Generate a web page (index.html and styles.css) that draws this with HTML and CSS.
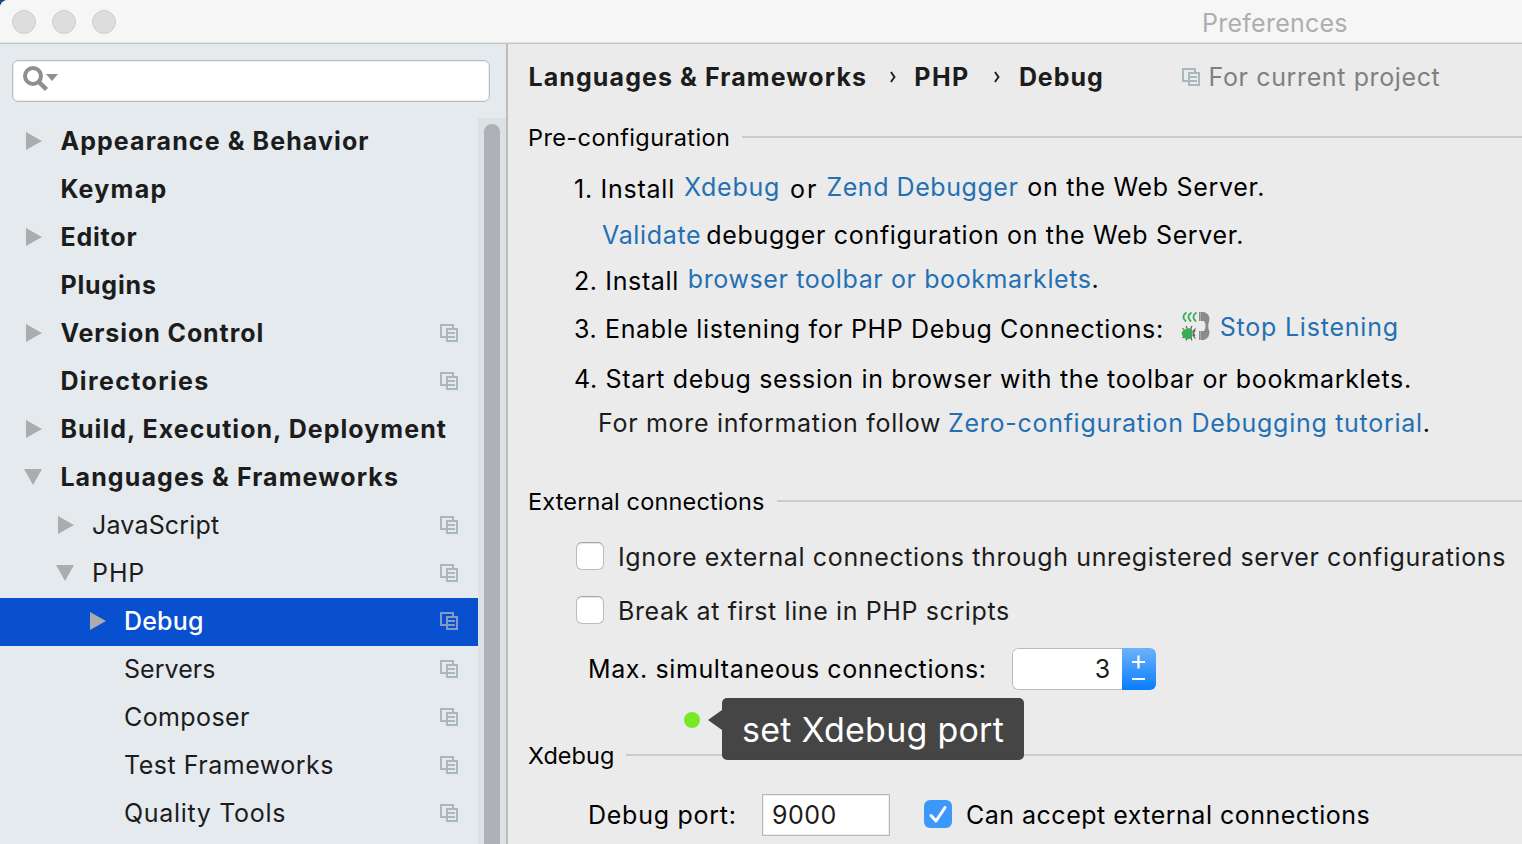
FILE: index.html
```
<!DOCTYPE html>
<html lang="en">
<head>
<meta charset="utf-8">
<title>Preferences</title>
<link rel="stylesheet" href="styles.css">
</head>
<body>
<svg class="defs" aria-hidden="true">
  <symbol id="copy" viewBox="0 0 18 18"><path d="M6 13H1V1H13V4M7 5H17V17H7ZM8 9H15M8 13H15" fill="none" stroke="currentColor" stroke-width="2"/></symbol>
  <symbol id="right" viewBox="0 0 18 18"><path d="M2 0L18 9L2 18Z" fill="#acacac"/></symbol>
  <symbol id="down" viewBox="0 0 18 18"><path d="M0 1H18L9 17Z" fill="#acacac"/></symbol>
</svg>
<div class="window">
  <header class="titlebar">
    <div class="lights"><i></i><i></i><i></i></div>
    <span class="title">Preferences</span>
  </header>
  <div class="body">
    <aside class="sidebar">
      <div class="search">
        <svg width="48" height="36" viewBox="0 0 48 36"><circle cx="20" cy="15" r="8" fill="none" stroke="#8f8f8f" stroke-width="4"/><path d="M26 21L33.500 28.500" stroke="#8f8f8f" stroke-width="4.500"/><path d="M33 13H45L39 20Z" fill="#8f8f8f"/></svg>
      </div>
      <div class="treewrap">
        <ul class="tree">
          <li class="top"><svg class="arrow"><use href="#right"/></svg><span class="k109">Appearance &amp; Behavior</span></li>
          <li class="top"><i class="arrow"></i><span class="k124">Keymap</span></li>
          <li class="top"><svg class="arrow"><use href="#right"/></svg><span class="k81">Editor</span></li>
          <li class="top"><i class="arrow"></i><span class="k81">Plugins</span></li>
          <li class="top"><svg class="arrow"><use href="#right"/></svg><span class="k91">Version Control</span><svg class="copy"><use href="#copy"/></svg></li>
          <li class="top"><i class="arrow"></i><span class="k137">Directories</span><svg class="copy"><use href="#copy"/></svg></li>
          <li class="top"><svg class="arrow"><use href="#right"/></svg><span class="k104">Build, Execution, Deployment</span></li>
          <li class="top"><svg class="arrow"><use href="#down"/></svg><span class="k109">Languages &amp; Frameworks</span></li>
          <li class="d1"><svg class="arrow"><use href="#right"/></svg><span class="k18">JavaScript</span><svg class="copy"><use href="#copy"/></svg></li>
          <li class="d1"><svg class="arrow"><use href="#down"/></svg><span class="k91">PHP</span><svg class="copy"><use href="#copy"/></svg></li>
          <li class="d2 selected"><svg class="arrow"><use href="#right"/></svg><span class="k18">Debug</span><svg class="copy"><use href="#copy"/></svg></li>
          <li class="d2"><i class="arrow"></i><span class="k5">Servers</span><svg class="copy"><use href="#copy"/></svg></li>
          <li class="d2"><i class="arrow"></i><span class="k40">Composer</span><svg class="copy"><use href="#copy"/></svg></li>
          <li class="d2"><i class="arrow"></i><span class="k51">Test Frameworks</span><svg class="copy"><use href="#copy"/></svg></li>
          <li class="d2"><i class="arrow"></i><span class="k68">Quality Tools</span><svg class="copy"><use href="#copy"/></svg></li>
        </ul>
        <div class="track"><div class="thumb"></div></div>
      </div>
    </aside>
    <main class="main">
      <div class="crumbs">
        <b class="k109">Languages &amp; Frameworks</b>
        <svg class="chev c1" width="6" height="12" viewBox="0 0 6 12"><path d="M1 1Q3 4 4.500 6Q3 8 1 11" fill="none" stroke="#222" stroke-width="2"/></svg>
        <b class="k156">PHP</b>
        <svg class="chev c2" width="6" height="12" viewBox="0 0 6 12"><path d="M1 1Q3 4 4.500 6Q3 8 1 11" fill="none" stroke="#222" stroke-width="2"/></svg>
        <b class="k93">Debug</b>
        <svg class="copy scope-icon"><use href="#copy"/></svg>
        <span class="scope k62">For current project</span>
      </div>
      <h2 class="head"><span class="k40">Pre-configuration</span></h2>
      <div class="line l1"><span class="k74">1. Install</span><a class="up k74 g9">Xdebug</a><span class="k201 g10">or</span><a class="up k55 g8">Zend Debugger</a><span class="up k69 g9">on the Web Server.</span></div>
      <div class="line l2"><a class="k66">Validate</a><span class="k66 g5">debugger configuration on the Web Server.</span></div>
      <div class="line l3"><span class="k62">2. Install</span><a class="up k60 g9">browser toolbar or bookmarklets</a><span class="up">.</span></div>
      <div class="line l4"><span class="k64">3. Enable listening for PHP Debug Connections:</span>
        <svg class="phone" width="30" height="30" viewBox="0 0 30 30">
          <path d="M5.500 1.500Q-.5 5.500 5 10.500M10.500 1.500Q4.500 5.500 10 10.500M15.500 1.500Q9.500 5.500 15 10.500" fill="none" stroke="#37ad55" stroke-width="1.800"/>
          <path d="M5 15L6.500 18M11 15L9.500 18M1.500 17L4 20M1.500 27L4 24.500M5 29.500L6.500 26M11 29.500L9.500 26M14.500 17.500L12 20.500M14.500 27.500L12 24.500" stroke="#555" stroke-width="1.100"/>
          <path d="M11 17.500V27Q8 29 4 27.500Q.5 25 .8 21Q5 16 11 17.500Z" fill="#37ad55"/>
          <path d="M11.500 19.500Q15 18.500 14.500 20L13 22L14.500 24.500Q13 26 11.500 25Z" fill="#666"/>
          <path d="M18 1H23Q29 3 28.500 9Q26 15 28.500 21Q29 26 23 29H18V20H23Q26 15 23 10H18Z" fill="#8b8b8b"/>
          <path d="M19.500 1V10M19.500 20V29" stroke="#aaa"/>
        </svg>
        <a class="up k78 g9">Stop Listening</a></div>
      <div class="line l5"><span class="k66">4. Start debug session in browser with the toolbar or bookmarklets.</span></div>
      <div class="line l6"><span class="soft k69">For more information follow</span><a class="k72 g7">Zero-configuration Debugging tutorial</a><span>.</span></div>
      <h2 class="head h-ext"><span class="k16">External connections</span></h2>
      <div class="line opt o1"><i class="box"></i><span class="k63">Ignore external connections through unregistered server configurations</span></div>
      <div class="line opt o2"><i class="box"></i><span class="k61">Break at first line in PHP scripts</span></div>
      <div class="line max"><span class="k60">Max. simultaneous connections:</span>
        <div class="spinner"><span class="num">3</span><span class="step"><svg width="34" height="42" viewBox="0 0 34 42"><path d="M10 14H23M16.500 7.500V20.500M10 31H23" stroke="#fff" stroke-width="2.200"/></svg></span></div>
      </div>
      <h2 class="head h-x"><span class="k5">Xdebug</span></h2>
      <div class="line port"><span class="k74">Debug port:</span><span class="field k51">9000</span><i class="box on"><svg width="28" height="28" viewBox="0 0 28 28"><path d="M7 15.500L12 21L21 7.500" fill="none" stroke="#fff" stroke-width="3" stroke-linecap="round" stroke-linejoin="round"/></svg></i><span class="k49">Can accept external connections</span></div>
    </main>
  </div>
  <i class="dot"></i>
  <div class="tip">set Xdebug port</div>
</div>
</body>
</html>
```
FILE: styles.css
```
* { box-sizing: border-box; }
body { margin: 0; background: #20477c; font: 25px/30px Inter, sans-serif; color: #1c1c1c; overflow: hidden; }
.defs { position: absolute; width: 0; height: 0; }
.window { position: relative; width: 1522px; height: 844px; overflow: hidden; display: flex; flex-direction: column; background: #ebebeb; border-top-left-radius: 8px; white-space: nowrap; }
.titlebar { height: 44px; flex: none; background: #f6f6f6; border-bottom: 1px solid #c6c8c9; box-shadow: inset 0 -1px #e0e1e1; display: flex; align-items: center; padding: 0 0 0 12px; }
.lights { display: flex; gap: 16px; width: 1190px; }
.lights i { width: 24px; height: 24px; border-radius: 50%; background: #dddddd; border: 1px solid #cdcdcd; }
.title { color: #aeaeae; letter-spacing: .25px; padding-top: 2px; }
.body { flex: 1; display: flex; min-height: 0; }
.sidebar { width: 508px; flex: none; background: #e5eaee; border-right: 2px solid #bdbdbd; padding-top: 16px; }
.search { width: 478px; height: 42px; margin-left: 12px; background: #fff; border: 1px solid #b9bdc0; border-radius: 6px; box-shadow: inset 0 0 0 1px #eceff1; }
.search svg { display: block; }
.treewrap { display: flex; margin-top: 16px; height: 726px; }
.tree { width: 478px; margin: 0; padding: 0; list-style: none; }
.tree li { height: 48px; display: flex; align-items: center; padding: 0 20px 2px 24px; }
.tree .arrow { width: 18px; height: 18px; flex: none; margin-right: 18px; }
.tree .top { font-weight: 700; }
.tree .top .arrow { margin-right: 18.4px; }
.tree .d1 { padding-left: 56px; }
.tree .d2 { padding-left: 88px; }
.tree .selected { background: #0850d0; color: #fff; font-weight: 500; }
.copy { width: 18px; height: 18px; flex: none; margin-left: auto; color: #a9b7be; }
.selected .copy { color: #7f9cc4; }
.track { flex: 1; background: #dce1e4; padding: 6px 6px 0; }
.thumb { height: 740px; background: #afb1b6; border-radius: 8px; }
.main { flex: 1; min-width: 0; height: 800px; }
.crumbs { height: 66px; display: flex; align-items: center; padding-left: 20.5px; }
.crumbs b { font-weight: 700; }
.c1 { margin: 0 18px 0 23px; }
.c2 { margin: 0 19px 0 24px; }
.crumbs .scope-icon { margin: 0 9px 0 78px; }
.scope { color: #808080; }
.head { margin: 0; height: 54px; display: flex; align-items: center; gap: 12px; padding-left: 20px; font-size: 23.5px; font-weight: 400; color: #000; }
.head span { padding-top: 2px; }
.head::after { content: ""; flex: 1; height: 2px; background: #cbcbcb; }
.h-ext { margin-top: 40px; height: 42px; }
.h-x { height: 94px; }
.line { display: flex; align-items: center; padding-left: 66px; color: #000; }
.line a { color: #2470b3; }
.up { padding-bottom: 4px; }
.l1 { height: 50px; }
.l2 { height: 42px; padding-left: 94px; }
.l3 { height: 50px; }
.l4 { height: 46px; }
.l5 { height: 54px; }
.l6 { height: 34px; padding-left: 90px; }
.soft { color: #1c1c1c; }
.phone { margin: 0 0 6px 17px; }
.g5 { margin-left: 5px; }
.g7 { margin-left: 7px; }
.g8 { margin-left: 8px; }
.g9 { margin-left: 9px; }
.g10 { margin-left: 10px; }
.opt { padding-left: 68px; gap: 14px; color: #1c1c1c; }
.o1 { height: 70px; }
.o2 { height: 38px; }
.box { width: 28px; height: 28px; flex: none; margin-bottom: 2px; background: #fff; border: 1px solid #bcbcbc; border-top-color: #a5a5a5; border-radius: 6px; box-shadow: inset 0 1px 1px #e4e4e4; }
.box.on { background: #3d98fb; border: 0; box-shadow: none; margin-left: 34px; margin-right: 14px; }
.box svg { display: block; }
.max { height: 78px; padding-left: 80px; }
.spinner { display: flex; width: 144px; height: 42px; margin-left: 25.5px; border-radius: 6px; overflow: hidden; background: #fff; }
.num { width: 110px; padding: 5px 12px 5px 0; text-align: right; color: #1c1c1c; border: 1px solid #b9b9b9; border-right: 0; border-radius: 6px 0 0 6px; }
.step { width: 34px; background: linear-gradient(#6bb3fa, #0a7cff); }
.step svg { display: block; }
.port { height: 26px; padding-left: 80px; }
.field { width: 128px; height: 42px; margin-left: 25.3px; padding: 5px 9px; background: #fff; border: 1px solid #b8b8b8; box-shadow: inset 0 0 0 1px #ededed; color: #1c1c1c; }
.dot { position: absolute; left: 684px; top: 712px; width: 16px; height: 16px; border-radius: 50%; background: #76ea28; }
.tip { position: absolute; left: 722px; top: 698px; width: 302px; height: 62px; padding: 2px 0 0 20px; border-radius: 5px; background: rgba(56, 56, 56, .93); color: #fff; font-size: 34px; line-height: 60px; letter-spacing: .25px; }
.tip::before { content: ""; position: absolute; left: -14px; top: 12px; border: 10px solid transparent; border-left: 0; border-right: 14px solid rgba(56, 56, 56, .93); }
.k5 { letter-spacing: .05px; }
.k16 { letter-spacing: .16px; }
.k18 { letter-spacing: .18px; }
.k40 { letter-spacing: .4px; }
.k49 { letter-spacing: .49px; }
.k51 { letter-spacing: .51px; }
.k55 { letter-spacing: .55px; }
.k60 { letter-spacing: .6px; }
.k61 { letter-spacing: .61px; }
.k62 { letter-spacing: .62px; }
.k63 { letter-spacing: .63px; }
.k64 { letter-spacing: .64px; }
.k66 { letter-spacing: .66px; }
.k68 { letter-spacing: .68px; }
.k69 { letter-spacing: .69px; }
.k72 { letter-spacing: .72px; }
.k74 { letter-spacing: .74px; }
.k78 { letter-spacing: .78px; }
.k81 { letter-spacing: .81px; }
.k91 { letter-spacing: .91px; }
.k93 { letter-spacing: .93px; }
.k104 { letter-spacing: 1.04px; }
.k109 { letter-spacing: 1.09px; }
.k124 { letter-spacing: 1.24px; }
.k137 { letter-spacing: 1.37px; }
.k156 { letter-spacing: 1.56px; }
.k201 { letter-spacing: 2px; }
```
